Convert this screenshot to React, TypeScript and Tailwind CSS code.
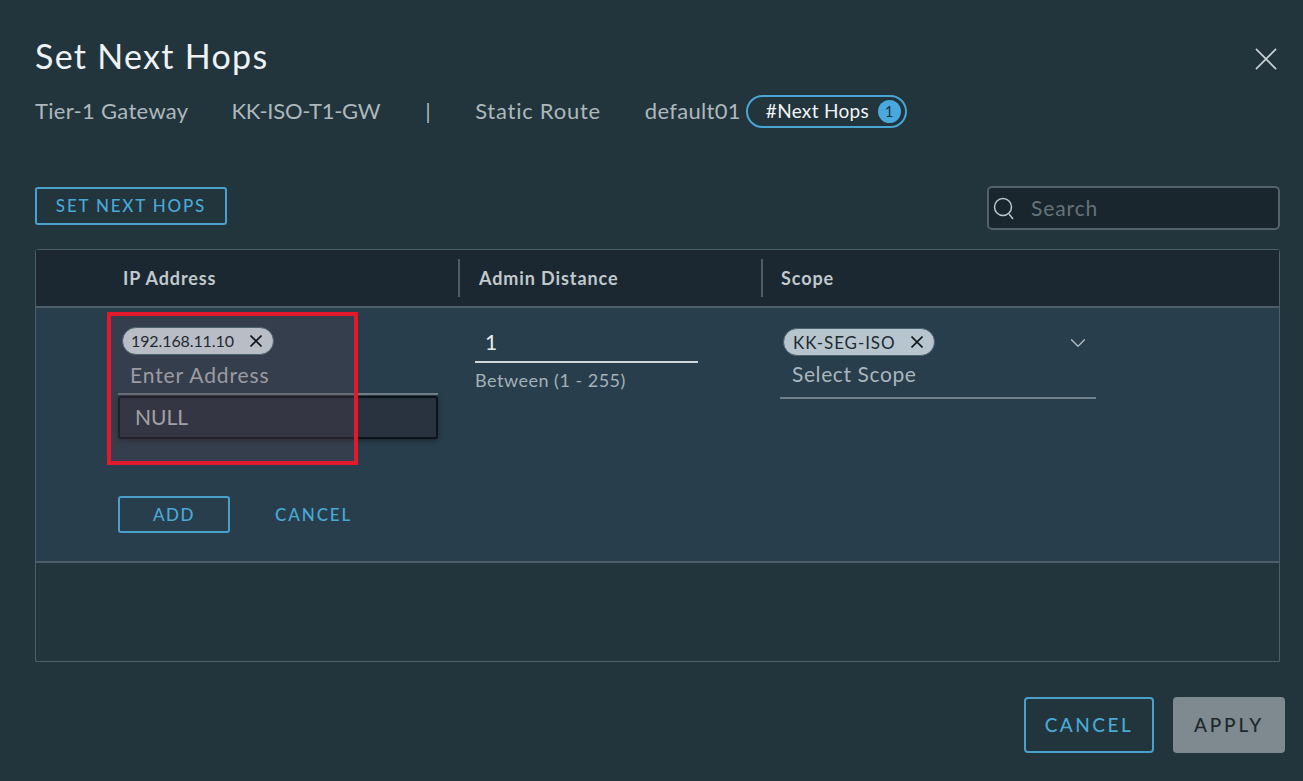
import { ChevronDown } from "lucide-react";

const font = "font-['Lato','Liberation_Sans',sans-serif]";

function CloseIcon({ size, className }: { size: number; className?: string }) {
  return (
    <svg width={size} height={size} viewBox="0 0 24 24" fill="none" stroke="currentColor" strokeWidth={24 / size * 1.6} className={className}>
      <path d="M1 1 L23 23 M23 1 L1 23" />
    </svg>
  );
}

function Chip({ label, className, labelClass }: { label: string; className: string; labelClass: string }) {
  return (
    <div className={`relative z-10 flex h-[28px] items-center justify-between rounded-full border border-[#4d6470] pl-[8px] pr-[11px] text-[#1f2a30] ${className}`}>
      <span className={`leading-none ${labelClass}`}>{label}</span>
      <CloseIcon size={12} className="text-[#10181c]" />
    </div>
  );
}

export default function App() {
  return (
    <div className={`relative flex h-[781px] w-[1303px] flex-col overflow-hidden bg-[#22343c] pl-[35px] pr-[23px] ${font}`}>
      {/* Header */}
      <div className="flex h-[82px] items-end justify-between pb-[6px]">
        <h1 className="text-[34px] leading-[40px] tracking-[1.3px] text-[#eef2f4]">Set Next Hops</h1>
        <CloseIcon size={22} className="mb-[6px] mr-[3px] text-[#c9d2d6]" />
      </div>

      {/* Breadcrumb */}
      <div className="mt-[10px] flex h-[36px] items-center text-[22px] tracking-[0.3px] text-[#adb8bd]">
        <span>Tier-1 Gateway</span>
        <span className="ml-[43px] tracking-[-0.25px]">KK-ISO-T1-GW</span>
        <span className="ml-[45px]">|</span>
        <span className="ml-[44px] tracking-[0.75px]">Static Route</span>
        <span className="ml-[44px]">default01</span>
        <div className="ml-[5px] mt-[3px] flex h-[33px] w-[161px] items-center justify-between rounded-full border-2 border-[#49a6d4] pl-[18px] pr-[4px]">
          <span className="text-[19px] tracking-[0.3px] text-[#f2f5f6]">#Next Hops</span>
          <span className="flex h-[23px] w-[23px] items-center justify-center rounded-full bg-[#49a9dc] text-[15px] text-[#143040]">1</span>
        </div>
      </div>

      {/* Toolbar */}
      <div className="mt-[58px] flex h-[45px] items-start justify-between">
        <button className="mt-[1px] h-[38px] w-[192px] rounded-[3px] border-2 border-[#49a1cb] text-[17px] font-medium tracking-[1.8px] text-[#49a9d6]">
          SET NEXT HOPS
        </button>
        <div className="flex h-[44px] w-[293px] items-center rounded-[5px] border-2 border-[#53626b] bg-[#1a262e]">
          <svg width="26" height="26" viewBox="0 0 26 26" fill="none" stroke="#bcc6ca" strokeWidth="1.5" className="ml-[3px] mt-[2px]">
            <circle cx="11" cy="11" r="8.5" />
            <path d="M17 18 L21 23" />
          </svg>
          <span className="ml-[13px] text-[21px] tracking-[0.9px] text-[#65737a]">Search</span>
        </div>
      </div>

      {/* Table */}
      <div className="mt-[18px] flex h-[413px] flex-col rounded-t-[3px] border border-[#4c5f69]">
        <div className="flex h-[58px] shrink-0 items-center border-b-2 border-[#4c5f69] bg-[#1b2832] text-[18px] font-bold tracking-[0.9px] text-[#c1c9cd]">
          <div className="flex h-[38px] w-[424px] items-center border-r-2 border-[#4c5f69] pl-[87px]">IP Address</div>
          <div className="flex h-[38px] w-[303px] items-center border-r-2 border-[#4c5f69] pl-[19px]">Admin Distance</div>
          <div className="pl-[18px]">Scope</div>
        </div>

        <div className="flex h-[255px] shrink-0 flex-col border-b-2 border-[#4c5f69] bg-[#283e4c]">
          <div className="flex">
            <div className="w-[424px] pl-[82px] pt-[19px]">
              <Chip label="192.168.11.10" className="ml-[4px] w-[152px] bg-[#b9bec6]" labelClass="text-[16px] tracking-[-0.1px]" />
              <div className="mt-[5px] h-[35px] w-[320px] border-b-2 border-[#727f87] pl-[12px] text-[21px] leading-[30px] tracking-[0.9px] text-[#bac3c8]">
                Enter Address
              </div>
              <div className="mt-[1px] flex h-[43px] w-[320px] items-center rounded-[3px] border-2 border-[#0d1318] bg-[#28333f] pb-[2px] pl-[15px] text-[21px] text-[#c3cbd0] shadow-[0_2px_5px_rgba(0,0,0,0.35)]">
                NULL
              </div>
            </div>

            <div className="w-[303px] pl-[15px] pt-[19px]">
              <div className="h-[36px] w-[223px] border-b-2 border-[#cfd6d9] pl-[10px] text-[21px] leading-[30px] text-[#e9edef]">1</div>
              <div className="mt-[5px] text-[18px] leading-[24px] tracking-[0.5px] text-[#a3b2ba]">Between (1 - 255)</div>
            </div>

            <div className="pl-[17px] pt-[20px]">
              <div className="relative w-[316px]">
                <Chip label="KK-SEG-ISO" className="ml-[3px] w-[152px] bg-[#b7c5cf] !pl-[9px]" labelClass="text-[17px] tracking-[0.9px]" />
                <ChevronDown size={26} strokeWidth={1.1} className="absolute right-[5px] top-[2px] text-[#b6c1c7]" />
                <div className="mt-[3px] h-[40px] border-b-2 border-[#6f7f88] pl-[12px] text-[21px] leading-[30px] tracking-[0.6px] text-[#a9b6bd]">
                  Select Scope
                </div>
              </div>
            </div>
          </div>

          <div className="ml-[82px] mt-[57px] flex items-center">
            <button className="h-[37px] w-[112px] rounded-[3px] border-2 border-[#49a1cb] text-[17px] font-medium tracking-[1.6px] text-[#49a9d6]">ADD</button>
            <span className="ml-[45px] text-[17px] font-medium tracking-[1.9px] text-[#49a9d6]">CANCEL</span>
          </div>
        </div>
      </div>

      {/* Footer */}
      <div className="mr-[-5px] mt-[35px] flex justify-end gap-[19px]">
        <button className="h-[56px] w-[130px] rounded-[4px] border-2 border-[#49a1cb] text-[19px] font-medium tracking-[2.5px] text-[#49a9d6]">CANCEL</button>
        <button className="h-[56px] w-[112px] rounded-[4px] bg-[#7e8a8f] text-[19px] font-medium tracking-[2.8px] text-[#20282d]">APPLY</button>
      </div>

      {/* Red annotation */}
      <div className="absolute left-[107px] top-[312px] h-[153px] w-[251px] border-[4px] border-[#e2192c] bg-[#553e4b4d]" />
    </div>
  );
}
